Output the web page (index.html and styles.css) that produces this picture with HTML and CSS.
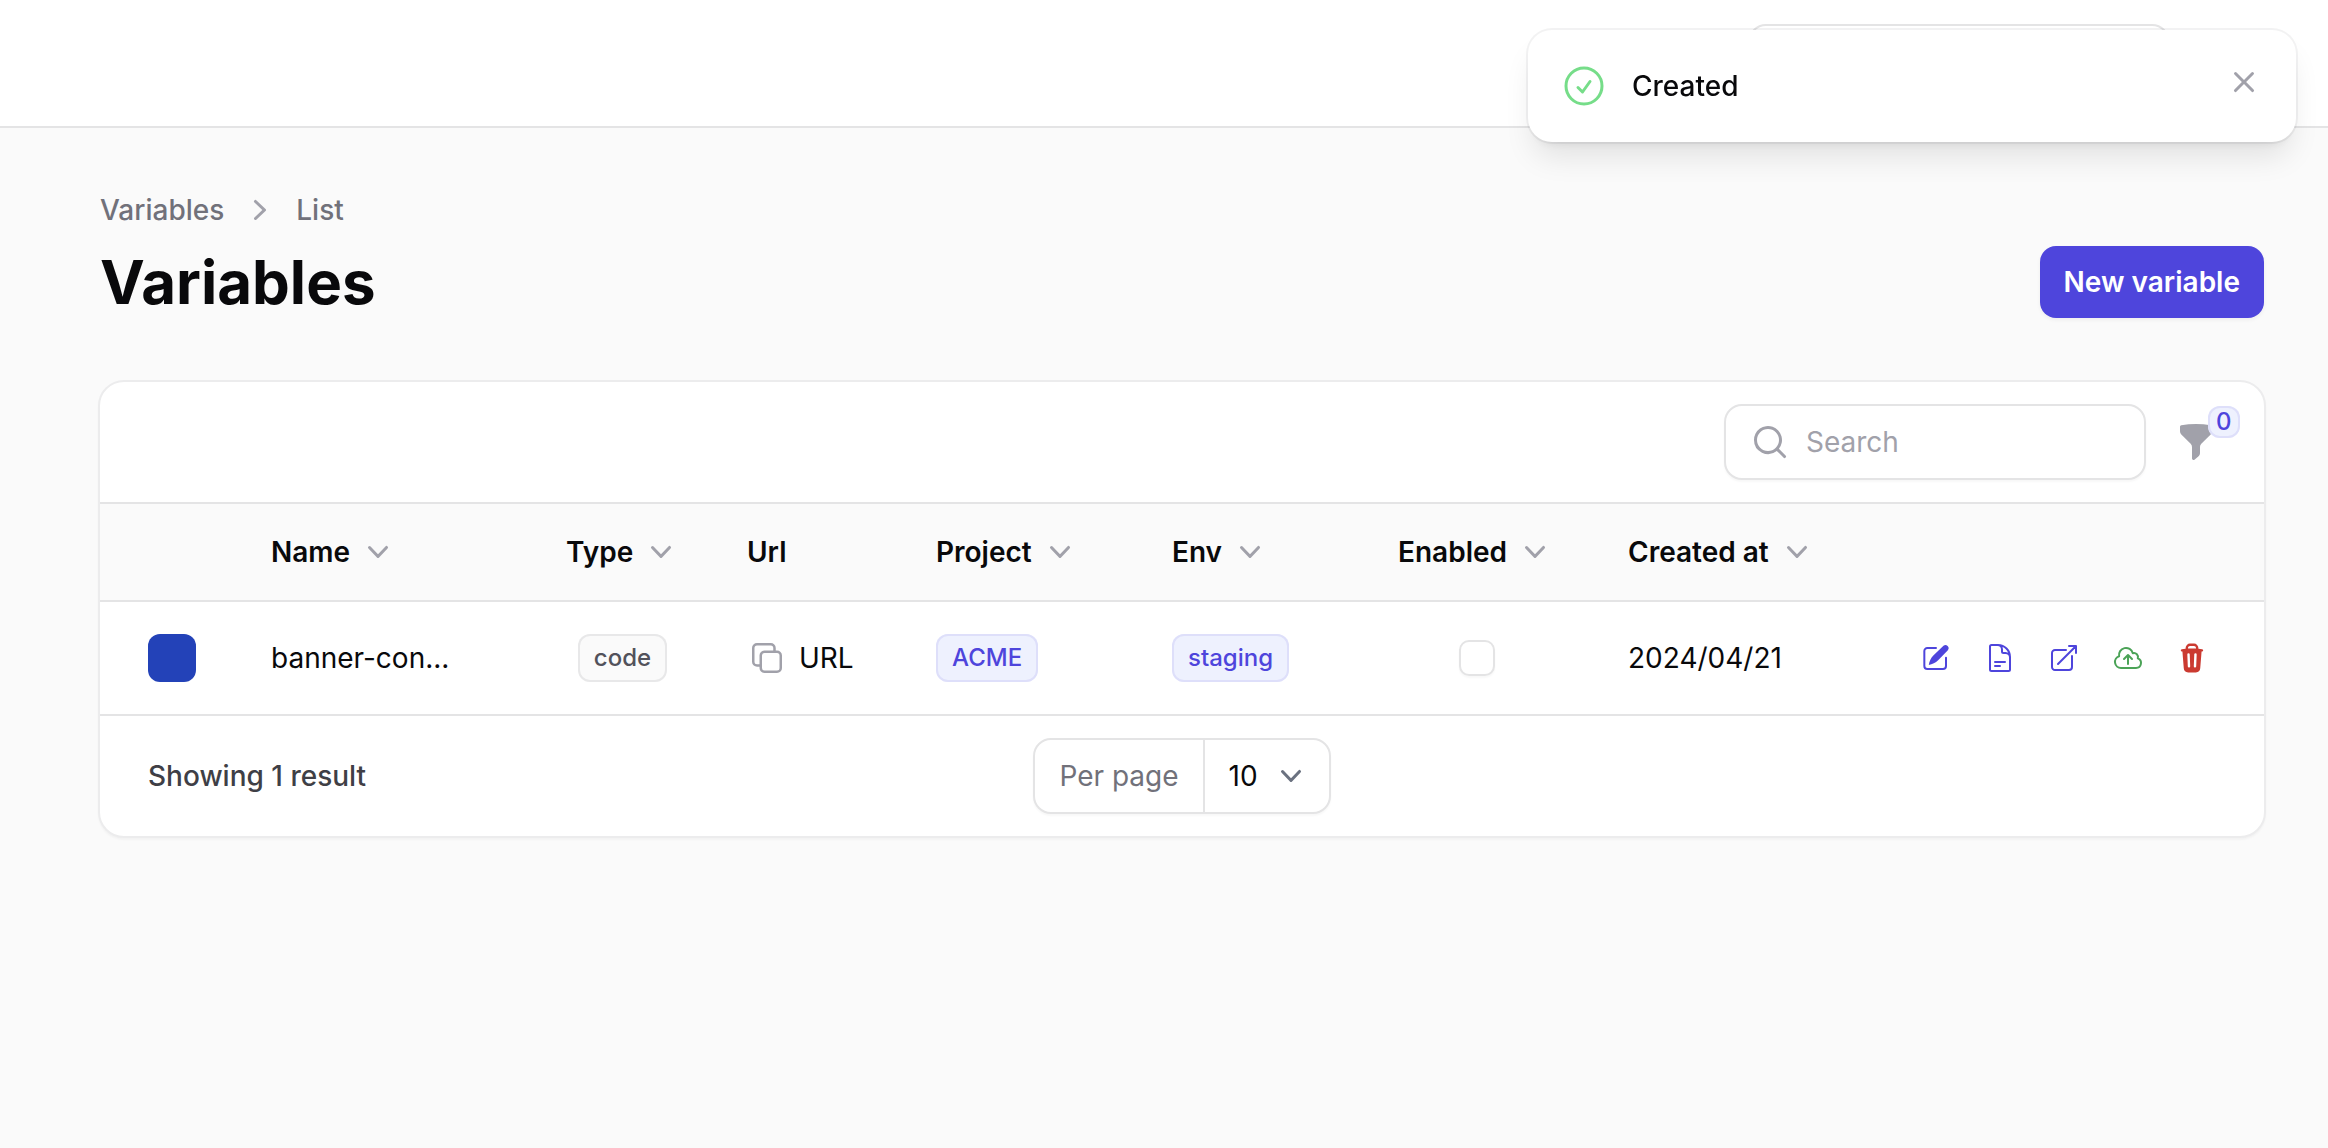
FILE: index.html
```html
<!DOCTYPE html>
<html lang="en">
<head>
<meta charset="utf-8">
<meta name="viewport" content="width=device-width, initial-scale=1">
<title>Variables</title>
<link rel="stylesheet" href="styles.css">
</head>
<body>
<svg class="sprite" aria-hidden="true">
  <symbol id="chevron-down" viewBox="0 0 20 20"><path fill="currentColor" fill-rule="evenodd" d="M5.23 7.21a.75.75 0 011.06.02L10 11.168l3.71-3.938a.75.75 0 111.08 1.04l-4.25 4.5a.75.75 0 01-1.08 0l-4.25-4.5a.75.75 0 01.02-1.06z"/></symbol>
</svg>

<header class="topbar">
  <input class="field global-search" type="search" aria-label="Global search">
</header>

<div class="toast" role="status">
  <svg class="icon-lg toast-icon" viewBox="0 0 24 24" fill="none" stroke="currentColor" stroke-width="1.5" stroke-linecap="round" stroke-linejoin="round"><path d="M9 12.75L11.25 15 15 9.75M21 12a9 9 0 11-18 0 9 9 0 0118 0z"/></svg>
  <p class="toast-title">Created</p>
  <button class="icon-button toast-close" type="button" aria-label="Close">
    <svg class="icon" viewBox="0 0 20 20" fill="currentColor"><path d="M6.28 5.22a.75.75 0 00-1.06 1.06L8.94 10l-3.72 3.72a.75.75 0 101.06 1.06L10 11.06l3.72 3.72a.75.75 0 101.06-1.06L11.06 10l3.72-3.72a.75.75 0 00-1.06-1.06L10 8.94 6.28 5.22z"/></svg>
  </button>
</div>

<main class="page">
  <nav class="breadcrumbs" aria-label="Breadcrumb">
    <a href="#">Variables</a>
    <svg class="icon" viewBox="0 0 20 20" fill="currentColor"><path fill-rule="evenodd" d="M7.21 14.77a.75.75 0 01.02-1.06L11.168 10 7.23 6.29a.75.75 0 111.04-1.08l4.5 4.25a.75.75 0 010 1.08l-4.5 4.25a.75.75 0 01-1.06-.02z"/></svg>
    <a href="#">List</a>
  </nav>
  <div class="page-header">
    <h1>Variables</h1>
    <button class="primary-button" type="button">New variable</button>
  </div>

  <section class="card">
    <div class="toolbar">
      <label class="field search">
        <svg class="icon" viewBox="0 0 20 20" fill="currentColor"><path fill-rule="evenodd" d="M9 3.5a5.5 5.5 0 100 11 5.5 5.5 0 000-11zM2 9a7 7 0 1112.452 4.391l3.328 3.329a.75.75 0 11-1.06 1.06l-3.329-3.328A7 7 0 012 9z"/></svg>
        <input type="search" placeholder="Search" aria-label="Search">
      </label>
      <button class="icon-button filter" type="button" aria-label="Filter">
        <svg class="icon" viewBox="0 0 20 20" fill="currentColor"><path d="M2.628 1.601C5.028 1.206 7.49 1 10 1s4.973.206 7.372.601a.75.75 0 01.628.74v2.288a2.25 2.25 0 01-.659 1.59l-4.682 4.683a2.25 2.25 0 00-.659 1.59v3.037c0 .684-.31 1.33-.844 1.757l-1.937 1.55A.75.75 0 018 18.25v-5.757a2.25 2.25 0 00-.659-1.591L2.659 6.22A2.25 2.25 0 012 4.629V2.34a.75.75 0 01.628-.74z"/></svg>
        <span class="badge badge-primary filter-count">0</span>
      </button>
    </div>

    <table class="variables">
      <colgroup>
        <col class="c-color"><col class="c-name"><col class="c-type"><col class="c-url"><col class="c-project"><col class="c-env"><col class="c-enabled"><col class="c-created"><col class="c-actions">
      </colgroup>
      <thead>
        <tr>
          <th scope="col" aria-label="Color"></th>
          <th scope="col"><button class="sort" type="button">Name <svg class="icon"><use href="#chevron-down"/></svg></button></th>
          <th scope="col"><button class="sort" type="button">Type <svg class="icon"><use href="#chevron-down"/></svg></button></th>
          <th scope="col">Url</th>
          <th scope="col"><button class="sort" type="button">Project <svg class="icon"><use href="#chevron-down"/></svg></button></th>
          <th scope="col"><button class="sort" type="button">Env <svg class="icon"><use href="#chevron-down"/></svg></button></th>
          <th scope="col"><button class="sort" type="button">Enabled <svg class="icon"><use href="#chevron-down"/></svg></button></th>
          <th scope="col"><button class="sort" type="button">Created at <svg class="icon"><use href="#chevron-down"/></svg></button></th>
          <th scope="col" aria-label="Actions"></th>
        </tr>
      </thead>
      <tbody>
        <tr>
          <td class="color-cell"><span class="swatch"></span></td>
          <td>banner-con...</td>
          <td class="type-cell"><span class="badge badge-gray">code</span></td>
          <td>
            <button class="copy" type="button">
              <svg class="icon" viewBox="0 0 24 24" fill="none" stroke="currentColor" stroke-width="1.5" stroke-linecap="round" stroke-linejoin="round"><path d="M16.5 8.25V6a2.25 2.25 0 00-2.25-2.25H6A2.25 2.25 0 003.75 6v8.25A2.25 2.25 0 006 16.5h2.25m8.25-8.25H18a2.25 2.25 0 012.25 2.25V18A2.25 2.25 0 0118 20.25h-7.5A2.25 2.25 0 018.25 18v-1.5m8.25-8.25h-6a2.25 2.25 0 00-2.25 2.25v6"/></svg>
              URL
            </button>
          </td>
          <td><span class="badge badge-primary">ACME</span></td>
          <td><span class="badge badge-primary">staging</span></td>
          <td class="enabled-cell"><input class="checkbox" type="checkbox" aria-label="Enabled"></td>
          <td>2024/04/21</td>
          <td>
            <div class="actions">
              <button class="icon-button primary" type="button" aria-label="Edit"><svg class="icon-sm" viewBox="0 0 24 24"><path fill="currentColor" d="M6.6 17.2C6.9 14.6 8.1 12 10 10.1L17.6 2.9a2.35 2.35 0 013.3 3.3L13.6 13.7C11.7 15.6 9.2 16.8 6.6 17.2z"/><path fill="none" stroke="currentColor" stroke-width="1.5" stroke-linecap="round" d="M12 4.5H5.5A2.25 2.25 0 003.25 6.75V18A2.25 2.25 0 005.5 20.25h11.75A2.25 2.25 0 0019.5 18V11.75"/></svg></button>
              <button class="icon-button primary" type="button" aria-label="View"><svg class="icon-sm" viewBox="0 0 24 24" fill="none" stroke="currentColor" stroke-width="1.5" stroke-linecap="round" stroke-linejoin="round"><path d="M19.5 14.25v-2.625a3.375 3.375 0 00-3.375-3.375h-1.5A1.125 1.125 0 0113.5 7.125v-1.5a3.375 3.375 0 00-3.375-3.375H8.25m0 12.75h7.5m-7.5 3H12M10.5 2.25H5.625c-.621 0-1.125.504-1.125 1.125v17.25c0 .621.504 1.125 1.125 1.125h12.75c.621 0 1.125-.504 1.125-1.125V11.25a9 9 0 00-9-9z"/></svg></button>
              <a class="icon-button primary" href="#" aria-label="Open"><svg class="icon-sm" viewBox="0 0 24 24" fill="none" stroke="currentColor" stroke-width="1.5" stroke-linecap="round" stroke-linejoin="round"><path d="M13.5 6H5.25A2.25 2.25 0 003 8.25v10.5A2.25 2.25 0 005.25 21h10.5A2.25 2.25 0 0018 18.75V10.5m-10.5 6L21 3m0 0h-5.25M21 3v5.25"/></svg></a>
              <button class="icon-button success" type="button" aria-label="Publish"><svg class="icon-sm" viewBox="0 0 24 24" fill="none" stroke="currentColor" stroke-width="1.5" stroke-linecap="round" stroke-linejoin="round"><path d="M12 16.5V9.75m0 0l3 3m-3-3l-3 3M6.75 19.5a4.5 4.5 0 01-1.41-8.775 5.25 5.25 0 0110.233-2.33 3 3 0 013.758 3.848A3.752 3.752 0 0118 19.5H6.75z"/></svg></button>
              <button class="icon-button danger" type="button" aria-label="Delete"><svg class="icon-sm" viewBox="0 0 20 20" fill="currentColor"><path fill-rule="evenodd" d="M8.75 1A2.75 2.75 0 006 3.75v.443c-.795.077-1.584.176-2.365.298a.75.75 0 10.23 1.482l.149-.022.841 10.518A2.75 2.75 0 007.596 19h4.807a2.75 2.75 0 002.742-2.53l.841-10.52.149.023a.75.75 0 00.23-1.482A41.03 41.03 0 0014 4.193V3.75A2.75 2.75 0 0011.25 1h-2.5zM10 4c.84 0 1.673.025 2.5.075V3.75c0-.69-.56-1.25-1.25-1.25h-2.5c-.69 0-1.25.56-1.25 1.25v.325C8.327 4.025 9.16 4 10 4zM8.58 7.72a.75.75 0 00-1.5.06l.3 7.5a.75.75 0 101.5-.06l-.3-7.5zm4.34.06a.75.75 0 10-1.5-.06l-.3 7.5a.75.75 0 101.5.06l.3-7.5z"/></svg></button>
            </div>
          </td>
        </tr>
      </tbody>
    </table>

    <footer class="pagination">
      <span class="summary">Showing 1 result</span>
      <div class="field per-page">
        <label for="per-page">Per page</label>
        <div class="select">
          <select id="per-page"><option>10</option><option>25</option><option>50</option></select>
          <svg class="icon"><use href="#chevron-down"/></svg>
        </div>
      </div>
    </footer>
  </section>
</main>
</body>
</html>
```
FILE: styles.css
```css
:root {
  --ink: #09090b;
  --muted: #71717a;
  --faint: #a1a1aa;
  --line: #e4e4e5;
  --surface: #fafafa;
  --primary: #4e45dc;
}

* { box-sizing: border-box; }

body {
  margin: 0;
  min-height: 100vh;
  background: var(--surface);
  color: var(--ink);
  font-family: Inter, "Liberation Sans", sans-serif;
  font-size: 28px;
  line-height: 40px;
}

button, input, select { margin: 0; font: inherit; color: inherit; }
button { padding: 0; border: 0; background: none; cursor: pointer; }
a { color: inherit; text-decoration: none; }
svg { display: block; flex: none; }

.sprite { position: absolute; width: 0; height: 0; }
.icon { width: 40px; height: 40px; }
.icon-lg { width: 48px; height: 48px; }
.icon-sm { width: 32px; height: 32px; }
.icon-button { display: block; color: var(--faint); }

.field {
  border: 2px solid var(--line);
  border-radius: 18px;
  background: #fff;
  box-shadow: 0 2px 2px rgba(0, 0, 0, .03);
}

.topbar {
  display: flex;
  justify-content: flex-end;
  height: 128px;
  padding: 24px 158px 24px 64px;
  border-bottom: 2px solid var(--line);
  background: #fff;
}
.global-search { width: 422px; height: 76px; }

.toast {
  position: fixed;
  top: 30px;
  right: 32px;
  display: flex;
  align-items: flex-start;
  gap: 24px;
  width: 768px;
  padding: 32px;
  border-radius: 24px;
  background: #fff;
  box-shadow: 0 0 0 2px rgba(9, 9, 11, .05), 0 20px 30px -6px rgba(0, 0, 0, .1), 0 8px 12px -8px rgba(0, 0, 0, .1);
}
.toast-icon { color: #76dd89; }
.toast-title { flex: 1; margin: 0; font-weight: 500; line-height: 48px; }

.page { padding: 62px 64px 64px 100px; }

.breadcrumbs {
  display: flex;
  align-items: center;
  gap: 16px;
  margin-bottom: 16px;
  color: var(--muted);
  font-weight: 500;
}
.breadcrumbs .icon { color: var(--faint); }

.page-header {
  display: flex;
  align-items: center;
  justify-content: space-between;
  margin-bottom: 62px;
}
h1 { margin: 0; font-size: 60px; font-weight: 700; line-height: 72px; }
.primary-button {
  height: 72px;
  padding: 0 24px;
  border-radius: 16px;
  background: var(--primary);
  color: #fff;
  font-weight: 600;
  box-shadow: 0 2px 4px rgba(0, 0, 0, .05);
}

.card {
  margin: 0 -2px;
  border: 2px solid #ececed;
  border-radius: 26px;
  background: #fff;
  box-shadow: 0 2px 2px rgba(0, 0, 0, .03);
}

.toolbar {
  display: flex;
  align-items: center;
  justify-content: flex-end;
  gap: 30px;
  height: 120px;
  padding: 0 48px;
}
.search {
  display: flex;
  align-items: center;
  gap: 16px;
  width: 422px;
  height: 76px;
  padding: 0 24px;
  color: var(--faint);
}
.search input {
  flex: 1;
  min-width: 0;
  padding: 0;
  border: 0;
  outline: 0;
  background: none;
  color: var(--ink);
}
.search input::placeholder { color: var(--faint); opacity: 1; }

.filter { position: relative; }
.filter .filter-count {
  position: absolute;
  top: -16px;
  left: 32px;
  height: 32px;
  padding: 0 8px;
}

.variables { width: 100%; border-collapse: separate; border-spacing: 0; table-layout: fixed; }
.c-color { width: 147px; }
.c-type { width: 181px; }
.c-url { width: 189px; }
.c-project { width: 236px; }
.c-env { width: 226px; }
.c-enabled { width: 230px; }
.c-created { width: 238px; }
.c-actions { width: 422px; }

th, td { padding: 0 24px; text-align: left; vertical-align: middle; white-space: nowrap; }
th {
  height: 100px;
  border-top: 2px solid var(--line);
  border-bottom: 2px solid var(--line);
  background: var(--surface);
  font-weight: 600;
}
td { height: 114px; border-bottom: 2px solid var(--line); }
.sort { display: flex; align-items: center; gap: 8px; font-weight: 600; }
.sort .icon { color: var(--faint); }

td.color-cell { padding-left: 48px; }
td.type-cell { padding-right: 44px; text-align: center; }
td.enabled-cell { padding-right: 48px; }

.swatch { display: block; width: 48px; height: 48px; border-radius: 12px; background: #2342b8; }

.badge {
  display: inline-flex;
  align-items: center;
  justify-content: center;
  height: 48px;
  padding: 0 16px;
  border-radius: 12px;
  font-size: 24px;
  font-weight: 500;
  line-height: 32px;
  vertical-align: middle;
}
.badge-gray { background: var(--surface); color: #52525b; box-shadow: inset 0 0 0 2px #e8e8e9; }
.badge-primary { background: #eef1fe; color: var(--primary); box-shadow: inset 0 0 0 2px #dedffa; }

.copy { display: flex; align-items: center; gap: 12px; }
.copy .icon { color: var(--faint); }

.checkbox {
  display: block;
  width: 36px;
  height: 36px;
  margin: 0 auto;
  border: 2px solid var(--line);
  border-radius: 10px;
  appearance: none;
  background: #fff;
  box-shadow: 0 2px 2px rgba(0, 0, 0, .03);
}

.actions { display: flex; justify-content: flex-end; gap: 32px; padding-right: 32px; }
.actions .primary { color: var(--primary); }
.actions .success { color: #4ba357; }
.actions .danger { color: #cb3a31; }

.pagination {
  display: grid;
  grid-template-columns: 1fr auto 1fr;
  align-items: center;
  height: 120px;
  padding: 0 48px;
}
.summary { color: #3f3f46; font-weight: 500; }
.per-page { display: flex; align-items: stretch; height: 76px; }
.per-page label {
  display: flex;
  align-items: center;
  padding: 0 24px;
  border-right: 2px solid var(--line);
  color: var(--muted);
}
.select { display: grid; align-items: center; }
.select > * { grid-area: 1 / 1; }
.select select {
  width: 124px;
  height: 100%;
  padding: 0 24px;
  border: 0;
  outline: 0;
  appearance: none;
  background: none;
}
.select .icon { justify-self: end; margin-right: 18px; color: #6b7280; pointer-events: none; }
```
